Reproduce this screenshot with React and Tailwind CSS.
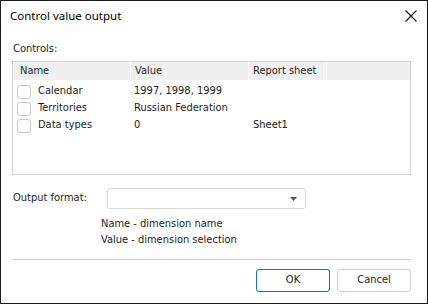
import React from 'react';

const rows = [
  { name: 'Calendar', value: '1997, 1998, 1999', sheet: '' },
  { name: 'Territories', value: 'Russian Federation', sheet: '' },
  { name: 'Data types', value: '0', sheet: 'Sheet1' },
];

const App = () => {
  return (
    <div
      className="w-[428px] h-[304px] bg-white border border-[#1b1b1b] flex flex-col text-[11px] text-[#1e1e1e]"
      style={{ fontFamily: '"DejaVu Sans Condensed", Tahoma, sans-serif' }}
    >
      {/* Title bar */}
      <div className="h-[29px] flex items-center justify-between pl-[9px] pr-[10px]">
        <span className="text-[11.5px] text-black" style={{ fontFamily: '"Noto Sans", sans-serif' }}>
          Control value output
        </span>
        <svg width="12" height="12" viewBox="0 0 12 12" className="mt-[1px]">
          <path d="M0.5 0.5 L11.5 11.5 M11.5 0.5 L0.5 11.5" stroke="#111" strokeWidth="1.1" />
        </svg>
      </div>

      <div className="flex flex-col px-[11px]">
        <div className="mt-[12px] h-[14px] leading-[14px] pl-[1px]">Controls:</div>

        {/* Table */}
        <div className="mt-[5px] h-[114px] border border-[#d4d4d4] mr-[5px]">
          <div className="flex h-[18px] gap-[1px] bg-white">
            <div className="w-[117px] bg-[#f0f0f0] pl-[7px] leading-[17px]">Name</div>
            <div className="w-[117px] bg-[#f0f0f0] pl-[4px] leading-[17px]">Value</div>
            <div className="w-[77px] bg-[#f0f0f0] pl-[4px] leading-[17px]">Report sheet</div>
            <div className="flex-1 bg-[#f0f0f0]" />
          </div>
          <div className="pt-[3px]">
            {rows.map((r) => (
              <div key={r.name} className="flex h-[17px] items-center">
                <div className="w-[118px] flex items-center pl-[4px]">
                  <span className="w-[14px] h-[14px] border border-[#c8c8c8] rounded-[3px] bg-white mr-[7px]" />
                  <span>{r.name}</span>
                </div>
                <div className="w-[118px] pl-[3px]">{r.value}</div>
                <div className="w-[78px] pl-[4px]">{r.sheet}</div>
              </div>
            ))}
          </div>
        </div>

        {/* Output format */}
        <div className="flex items-center mt-[13px] h-[21px]">
          <div className="w-[95px] pl-[1px]">Output format:</div>
          <div className="w-[199px] h-[21px] border border-[#d9d9d9] rounded-[3px] flex items-center justify-end pr-[8px]">
            <svg width="7" height="4" viewBox="0 0 7 4">
              <path d="M0 0 H7 L3.5 4 Z" fill="#555" />
            </svg>
          </div>
        </div>

        <div className="ml-[89px] mt-[7px] leading-[16px]">
          <div>Name - dimension name</div>
          <div>Value - dimension selection</div>
        </div>

        <div className="mt-[11px] h-[1px] bg-[#d2d2d2] mr-[5px]" />

        <div className="flex justify-end gap-[7px] mt-[9px] mr-[5px]">
          <button className="w-[74px] h-[23px] border border-[#0a70c8] rounded-[3px] bg-white text-[11px] text-[#1e1e1e]">
            OK
          </button>
          <button className="w-[74px] h-[23px] border border-[#d0d0d0] rounded-[3px] bg-white text-[11px] text-[#1e1e1e]">
            Cancel
          </button>
        </div>
      </div>
    </div>
  );
};

export default App;
